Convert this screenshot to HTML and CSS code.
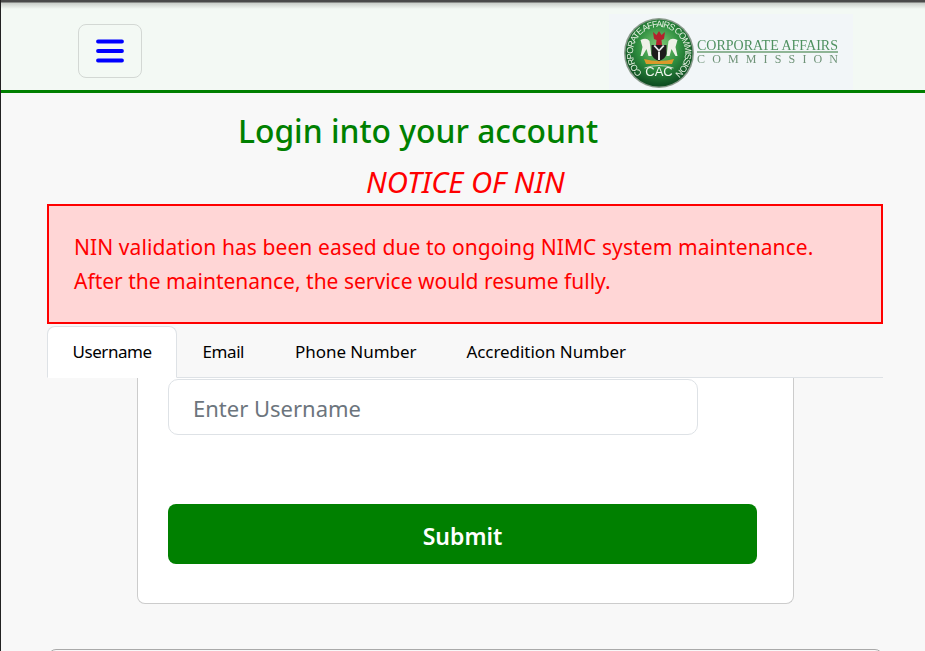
FILE: index.html
```html
<!DOCTYPE html>
<html lang="en">

<head>
  <meta charset="UTF-8" />
  <title>Login</title>
  <link rel="stylesheet" href="styles.css">
</head>

<body>
  <header class="topbar">
    <button class="menu-btn" type="button" aria-label="Menu">
      <svg width="28" height="24" viewBox="0 0 28 24">
        <path d="M2 2.500h24M2 12h24M2 21.500h24" stroke="#0000ff" stroke-width="3.800" stroke-linecap="round" fill="none" />
      </svg>
    </button>
    <div class="logo">
      <svg width="244" height="76" viewBox="0 0 244 76">
        <defs>
          <radialGradient id="seal" cx="50%" cy="40%" r="58%">
            <stop offset="0" stop-color="#86cf7b" />
            <stop offset="0.55" stop-color="#2f8f40" />
            <stop offset="1" stop-color="#0f4f22" />
          </radialGradient>
          <path id="ring" d="M51.500 66A26 26 0 1 1 51.600 66" fill="none" />
        </defs>
        <g transform="translate(-1.500 -1)">
          <circle cx="51.500" cy="40" r="35" fill="#8a9a8c" />
          <circle cx="51.500" cy="40" r="33.500" fill="url(#seal)" />
          <text class="seal-ring">
            <textPath href="#ring" startOffset="18" textLength="128">CORPORATE AFFAIRS COMMISSION</textPath>
          </text>
          <!-- eagle -->
          <path d="M45.500 19l3.500 3 2.500-4 2.500 4 3.500-3-1 7-2.500 1 .5 5h-6l.5-5-2.500-1z" fill="#b3212c" />
          <!-- horses -->
          <path d="M33 27q6-3 9 1l2 15h-3l-2-7-4 7h-2l2-9zM70 27q-6-3-9 1l-2 15h3l2-7 4 7h2l-2-9z" fill="#eef1e8" />
          <!-- shield -->
          <path d="M44 32h15v9q-1 5-7.500 7-6.500-2-7.500-7z" fill="#1c1c1c" />
          <path d="M46 33l5.500 6 5.500-6-1.500-1-4 4.500-4-4.500zM50.500 38h2v9h-2z" fill="#e9e9e9" />
          <path d="M36.500 46q15 4 30 0l-2 5h-26z" fill="#d89a2b" />
          <path d="M37 55q14.500-5 29 0" fill="none" stroke="#dfe8da" stroke-width="0.800" />
          <text class="seal-cac" x="51.500" y="63">CAC</text>
        </g>
        <text class="logo-top" x="88" y="36" textLength="141" lengthAdjust="spacingAndGlyphs">CORPORATE AFFAIRS</text>
        <rect x="88" y="37" width="141" height="2" fill="#8fb596" />
        <text class="logo-bottom" x="88" y="49" textLength="141">COMMISSION</text>
      </svg>
    </div>
  </header>

  <main class="content">
    <h1 class="title">Login into your account</h1>
    <h2 class="notice-title">NOTICE OF NIN</h2>
    <div class="notice">
      <span class="notice-first">NIN validation has been eased due to ongoing NIMC system maintenance.</span><br>
      After the maintenance, the service would resume fully.
    </div>

    <ul class="tabs">
      <li class="tab tight active">Username</li>
      <li class="tab tight">Email</li>
      <li class="tab">Phone Number</li>
      <li class="tab">Accredition Number</li>
    </ul>

    <form class="card">
      <input class="field" type="text" placeholder="Enter Username" />
      <button class="submit" type="button">Submit</button>
    </form>

    <div class="card-next"></div>
  </main>
</body>

</html>
```

FILE: styles.css
```css
html,
body {
  height: 100%;
}

body {
  font-family: "Noto Sans", Arial, sans-serif;
  background: #f8f8f8;
  margin: 0;
  border-left: 1px solid #222;
  overflow: hidden;
  box-sizing: border-box;
}

.topbar {
  height: 90px;
  display: flex;
  align-items: flex-end;
  justify-content: space-between;
  padding-left: 77px;
  padding-right: 72px;
  background: linear-gradient(#4a4a4a 0, #4a4a4a 2px, #c9cec9 3px, #f3f9f4 9px);
  border-bottom: 3px solid #008000;
}

.menu-btn {
  width: 64px;
  height: 54px;
  margin-bottom: 12px;
  display: flex;
  align-items: center;
  justify-content: center;
  background: transparent;
  border: 1px solid #d3d8d4;
  border-radius: 8px;
  padding: 0;
}

.logo {
  width: 244px;
  height: 76px;
  background: #f2f6f8;
}

.logo svg {
  display: block;
  filter: blur(0.4px);
}

.seal-ring {
  font-family: "Liberation Sans", Arial, sans-serif;
  font-size: 9px;
  fill: #e6efe2;
}

.seal-cac {
  font-family: "Liberation Sans", Arial, sans-serif;
  font-size: 13px;
  fill: #f1f5ef;
  text-anchor: middle;
}

.logo-top {
  font-family: "Liberation Serif", serif;
  font-size: 15px;
  fill: #4f9160;
}

.logo-bottom {
  font-family: "Liberation Serif", serif;
  font-size: 12px;
  fill: #6f9378;
}

.content {
  margin-left: 46px;
  width: 836px;
}

.title {
  margin: 19px 0 0 191px;
  font-size: 31.800px;
  line-height: 38px;
  font-weight: 500;
  color: #008000;
}

.notice-title {
  margin: 14px 0 0;
  padding-left: 319px;
  font-size: 29.300px;
  line-height: 36px;
  font-weight: 400;
  font-style: italic;
  color: #ff0000;
}

.notice {
  margin-top: 4px;
  height: 120px;
  box-sizing: border-box;
  padding: 24px 25px 0;
  background: #ffd6d6;
  border: 2px solid #ff0000;
  font-size: 21px;
  line-height: 34px;
  color: #ff0000;
}

.notice-first {
  letter-spacing: 0.085px;
}

.tabs {
  list-style: none;
  margin: 2px 0 0;
  padding: 0;
  display: flex;
  height: 52px;
  box-sizing: border-box;
  border-bottom: 1px solid #dee2e6;
}

.tab {
  padding: 0 24.500px;
  height: 52px;
  box-sizing: border-box;
  line-height: 50px;
  font-size: 17px;
  letter-spacing: -0.05px;
  color: #000;
  border: 1px solid transparent;
}

.tab:last-child {
  margin-left: -1px;
}

.tab.tight {
  letter-spacing: -0.45px;
}

.tab.active {
  background: #fff;
  border-color: #dee2e6 #dee2e6 #fff;
  border-radius: 8px 8px 0 0;
}

.card {
  margin-left: 90px;
  width: 657px;
  height: 226px;
  box-sizing: border-box;
  background: #fff;
  border: 1px solid #ccc;
  border-top: 0;
  border-radius: 0 0 8px 8px;
  padding: 1px 36px 0 30px;
}

.field {
  display: block;
  width: 530px;
  height: 56px;
  box-sizing: border-box;
  padding: 2px 24px 0;
  font-family: inherit;
  font-size: 22px;
  border: 1px solid #dee2e6;
  border-radius: 10px;
  background: #fff;
}

.field::placeholder {
  color: #6c757d;
  opacity: 1;
}

.submit {
  display: block;
  width: 589px;
  height: 60px;
  margin-top: 69px;
  padding: 3px 0 0;
  background: #008000;
  color: #fff;
  border: none;
  border-radius: 8px;
  font-family: inherit;
  font-size: 23px;
  font-weight: 600;
}

.card-next {
  margin: 45px 0 0 1px;
  width: 833px;
  height: 40px;
  border: 1px solid #aaa;
  border-radius: 8px;
}
```
